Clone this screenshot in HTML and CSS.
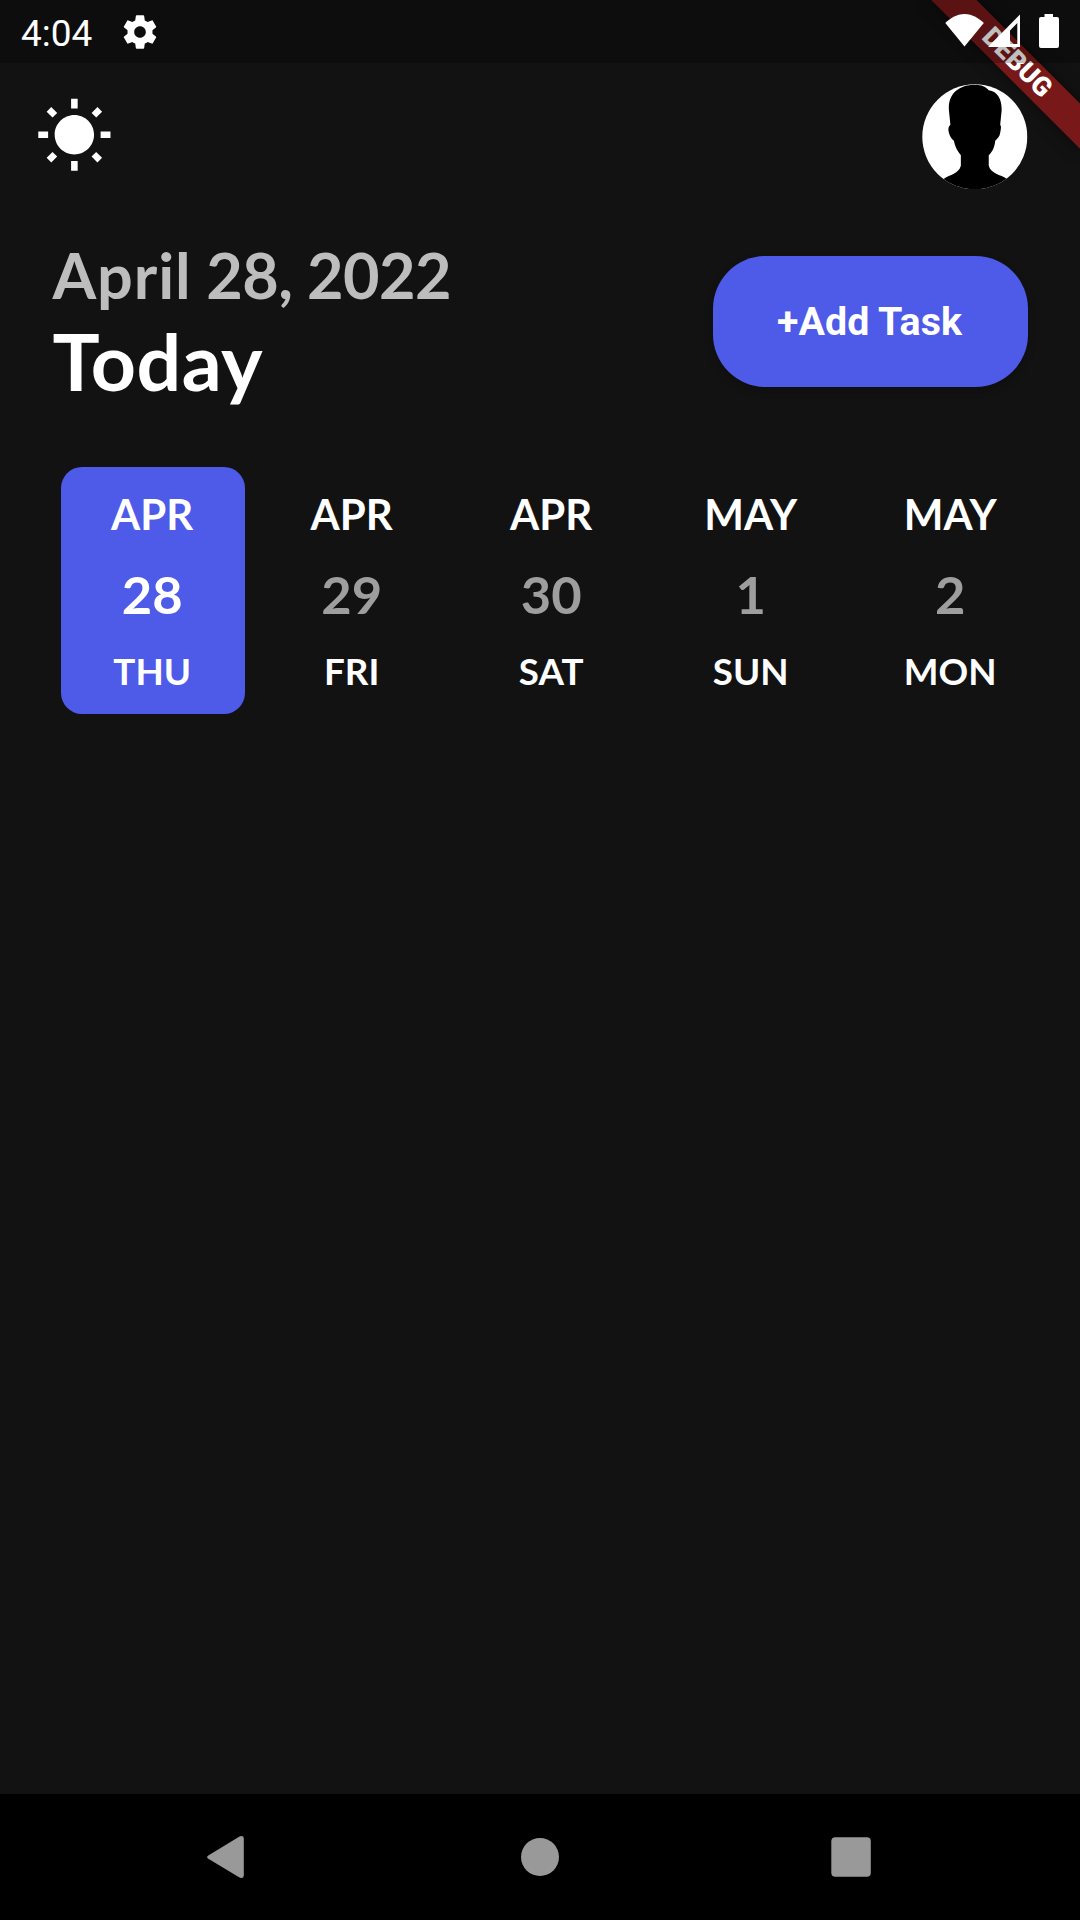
FILE: index.html
```html
<!DOCTYPE html>
<html lang="en">
<head>
<meta charset="utf-8">
<title>Tasks</title>
<link rel="stylesheet" href="styles.css">
</head>
<body>
<div class="screen">
  <div class="banner">DEBUG</div>

  <div class="status-bar">
    <span class="clock">4:04</span>
    <svg class="gear" viewBox="0 0 24 24"><path d="M19.43 12.98c.04-.32.07-.64.07-.98s-.03-.66-.07-.98l2.11-1.65c.19-.15.24-.42.12-.64l-2-3.46c-.12-.22-.39-.3-.61-.22l-2.49 1c-.52-.4-1.08-.73-1.69-.98l-.38-2.65C14.46 2.18 14.25 2 14 2h-4c-.25 0-.46.18-.49.42l-.38 2.65c-.61.25-1.17.59-1.69.98l-2.49-1c-.23-.09-.49 0-.61.22l-2 3.46c-.13.22-.07.49.12.64l2.11 1.65c-.04.32-.07.65-.07.98s.03.66.07.98l-2.11 1.65c-.19.15-.24.42-.12.64l2 3.46c.12.22.39.3.61.22l2.49-1c.52.4 1.08.73 1.69.98l.38 2.65c.03.24.24.42.49.42h4c.25 0 .46-.18.49-.42l.38-2.65c.61-.25 1.17-.59 1.69-.98l2.49 1c.23.09.49 0 .61-.22l2-3.46c.12-.22.07-.49-.12-.64l-2.11-1.65zM12 15.5c-1.93 0-3.5-1.57-3.5-3.5s1.57-3.5 3.5-3.5 3.5 1.57 3.5 3.5-1.57 3.5-3.5 3.5z"/></svg>
    <svg class="indicators" viewBox="0 0 120 63">
      <path d="M0.3 23C5 18.500 11.500 14 19.500 14S34 18.500 38.800 23L19.500 46.600Z"/>
      <path fill-rule="evenodd" d="M43 47L75 14.500V47ZM65 30.500V44H72.300V23Z"/>
      <path d="M99.500 14H108V17H112Q114 17 114 19V46Q114 48 112 48H96Q94 48 94 46V19Q94 17 96 17H99.500Z"/>
    </svg>
  </div>

  <header class="app-bar">
    <svg class="sun" viewBox="0 0 24 24"><path d="M6.760 4.840l-1.800-1.790-1.410 1.410 1.790 1.790 1.420-1.410zM4 10.500H1v2h3v-2zm9-9.950h-2V3.500h2V.55zm7.450 3.910l-1.410-1.410-1.790 1.790 1.410 1.410 1.790-1.790zm-3.210 13.700l1.790 1.800 1.410-1.410-1.800-1.790-1.400 1.400zM20 10.500v2h3v-2h-3zm-8-5c-3.310 0-6 2.690-6 6s2.690 6 6 6 6-2.690 6-6-2.690-6-6-6zm-1 16.950h2V19.500h-2v2.950zm-7.450-3.910l1.410 1.410 1.790-1.800-1.410-1.410-1.790 1.800z"/></svg>
    <svg class="avatar" viewBox="0 0 106 106">
      <defs><clipPath id="round"><circle cx="53" cy="53" r="52.700"/></clipPath></defs>
      <g clip-path="url(#round)">
        <rect width="106" height="106" fill="#fff"/>
        <path d="M53 .8C60 .8 64 3 67 6.200C76 7.500 80 15 80 26L78.500 41C80 43 79 46 78.500 49C78 53 75.500 55 73.500 57C73 64 70 69 67 71.500V82C69 90 79 91 85 95L90 106H16L22 95C28 91 37 90 39 82V71.500C36 68 33 63 32 57C29 55 28 52 27 49C26 45 26.500 43 28.500 41L27 26C26 10 37 .8 53 .8Z"/>
      </g>
    </svg>
  </header>

  <section class="heading">
    <div class="titles">
      <div class="date"><span class="date-month">April</span> 28, 2022</div>
      <div class="today">Today</div>
    </div>
    <button class="add-task">+Add Task</button>
  </section>

  <div class="days">
    <div class="day selected"><span class="month">APR</span><span class="number">28</span><span class="weekday">THU</span></div>
    <div class="day"><span class="month">APR</span><span class="number">29</span><span class="weekday">FRI</span></div>
    <div class="day"><span class="month">APR</span><span class="number">30</span><span class="weekday">SAT</span></div>
    <div class="day"><span class="month">MAY</span><span class="number">1</span><span class="weekday">SUN</span></div>
    <div class="day"><span class="month">MAY</span><span class="number">2</span><span class="weekday">MON</span></div>
  </div>

  <nav class="nav-bar">
    <svg class="nav-icon" viewBox="0 0 60 60"><path d="M9.300 28.500L40.500 9.500Q44.800 8 44.800 12V48Q44.800 52 40.500 50.500L9.300 31.800Q7 30 9.300 28.500Z"/></svg>
    <svg class="nav-icon" viewBox="0 0 60 60"><circle cx="30" cy="30" r="19"/></svg>
    <svg class="nav-icon" viewBox="0 0 60 60"><rect x="10.300" y="10.200" width="39.500" height="39.500" rx="4"/></svg>
  </nav>
</div>
</body>
</html>
```
FILE: styles.css
```css
* { box-sizing: border-box; }

body {
  margin: 0;
  background: #121212;
}

.screen {
  position: relative;
  display: flex;
  flex-direction: column;
  width: 1080px;
  height: 1920px;
  overflow: hidden;
  background: #121212;
  color: #fff;
  font-family: Lato, sans-serif;
  font-weight: 700;
}

.status-bar {
  position: relative;
  z-index: 2;
  display: flex;
  align-items: center;
  height: 63px;
  padding: 0 21px;
  background: rgba(0, 0, 0, 0.25);
  font-family: Roboto, sans-serif;
}

.clock {
  width: 99px;
  padding-top: 4px;
  font-size: 37px;
  font-weight: 400;
  line-height: 44px;
}

.gear {
  width: 40px;
  height: 40px;
  fill: #fff;
}

.indicators {
  width: 120px;
  height: 63px;
  margin-left: auto;
  margin-right: -6px;
  fill: #fff;
}

/* Corner ribbon, centred on its own strip and turned by 45 degrees */
.banner {
  position: absolute;
  z-index: 1;
  top: 47.25px;
  left: 912px;
  width: 210px;
  height: 31.5px;
  background: rgba(183, 28, 28, 0.627);
  box-shadow: 0 0 16px rgba(0, 0, 0, 0.5);
  font: 900 26.8px/31.5px Roboto, sans-serif;
  text-align: center;
  transform: rotate(45deg);
}

.app-bar {
  display: flex;
  justify-content: space-between;
  align-items: center;
  height: 147px;
  padding: 0 52.3px 0 34.5px;
}

.sun {
  width: 78.75px;
  height: 78.75px;
  fill: #fff;
}

.avatar {
  width: 105.6px;
  height: 105.6px;
}

.heading {
  display: flex;
  justify-content: space-between;
  align-items: flex-start;
  height: 257px;
  padding: 27px 52.5px 0;
}

.date {
  color: #bdbdbd;
  font-size: 63px;
  line-height: 76px;
  letter-spacing: -0.6px;
}

.date-month { letter-spacing: 0.9px; }

.today {
  font-size: 78.75px;
  line-height: 95px;
  letter-spacing: 0.5px;
}

.add-task {
  width: 315px;
  height: 131.25px;
  margin-top: 19px;
  padding: 0 1px 0 0;
  border: 0;
  border-radius: 52.5px;
  background: #4e5ae8;
  box-shadow: 0 4px 8px rgba(0, 0, 0, 0.2);
  color: #fff;
  font: 700 39.4px Roboto, sans-serif;
}

.days {
  display: flex;
  gap: 15.75px;
  padding-left: 60.8px;
}

.day {
  display: flex;
  flex-direction: column;
  align-items: center;
  width: 183.75px;
  height: 246.75px;
  padding: 22px 21.5px 21px 20.5px;
  border-radius: 21px;
}

.selected { background: #4e5ae8; }

.month {
  font-size: 42px;
  line-height: 51px;
}

.number {
  margin: 22px 0 24px;
  color: #9e9e9e;
  font-size: 52.5px;
  line-height: 63px;
}

.selected .number { color: #fff; }

.weekday {
  font-size: 36.75px;
  line-height: 44px;
}

.nav-bar {
  display: flex;
  justify-content: center;
  align-items: center;
  gap: 251px;
  height: 126px;
  margin-top: auto;
  background: #000;
}

.nav-icon {
  width: 60px;
  height: 60px;
  fill: #999;
}
```
